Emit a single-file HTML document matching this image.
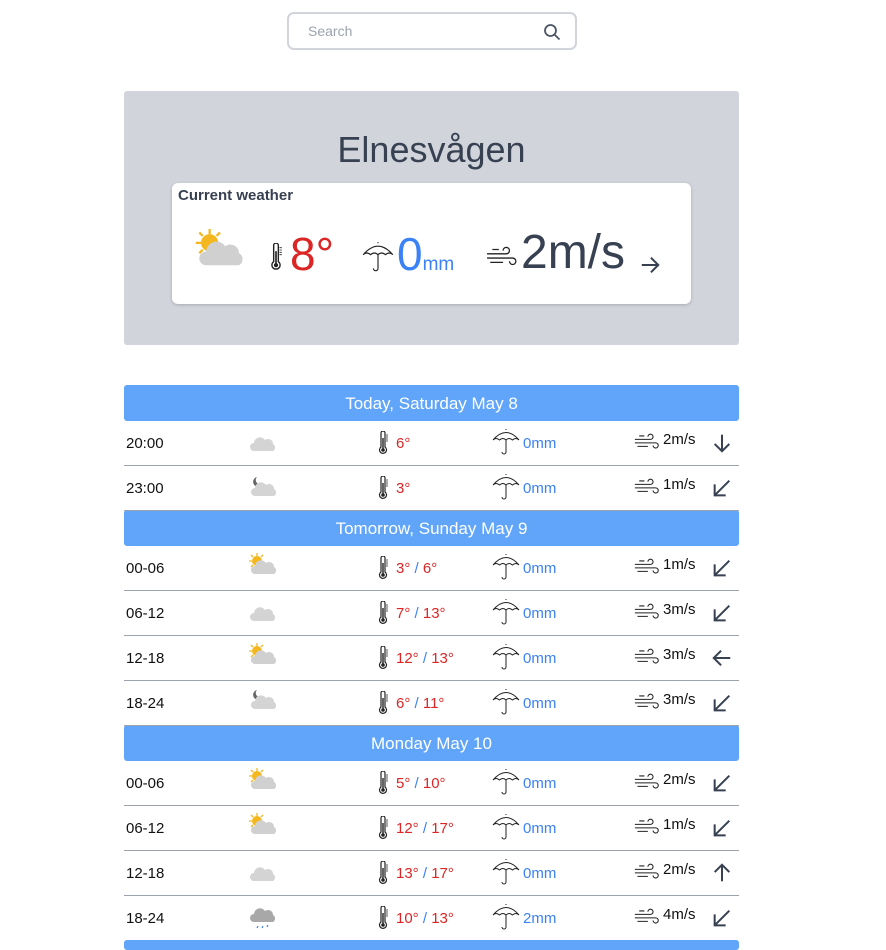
<!DOCTYPE html>
<html><head><meta charset="utf-8"><style>
*{box-sizing:border-box;margin:0;padding:0}
body{width:886px;height:942px;overflow:hidden;background:#fff;font-family:"Liberation Sans",sans-serif;color:#111;position:relative}
.search{position:absolute;left:287px;top:12px;width:290px;height:38px;border:2px solid #d1d5db;border-radius:7px}
.search span{position:absolute;left:19px;top:9px;font-size:14px;color:#9ca3af}
.search svg{position:absolute;right:14px;top:9px}
.card{position:absolute;left:124px;top:91px;width:615px;height:254px;background:#d1d5db;border-radius:3px}
.city{position:absolute;left:0;width:615px;top:38px;text-align:center;font-size:36px;color:#374151}
.cur{position:absolute;left:48px;top:92px;width:519px;height:121px;background:#fff;border-radius:6px;box-shadow:0 1px 3px rgba(0,0,0,.2)}
.cur .t{position:absolute;left:6px;top:4px;font-size:15px;color:#374151;font-weight:bold}
.abs{position:absolute}
.hdr{position:absolute;left:124px;width:615px;height:36px;background:#60a5fa;border-radius:3px;color:#fff;font-size:17px;text-align:center;line-height:37px}
.row{position:absolute;left:124px;width:615px;height:45px;border-bottom:1px solid #9ca3af;font-size:15px}
.row .c{position:absolute;top:14px}
.red{color:#dc2626}.blue{color:#3b82f6}
</style></head><body>
<svg width="0" height="0" style="position:absolute">
<defs>
<symbol id="th" viewBox="0 0 10 24"><path d="M3 2a2 2 0 0 1 4 0v14a3.5 3.5 0 1 1-4 0z" fill="none" stroke="#222" stroke-width="1.2"/><circle cx="5" cy="19" r="1.8" fill="#222"/><path d="M5 7v11" stroke="#222" stroke-width="1.4"/><path d="M8 4h2M8 6h2M8 8h2M8 10h2" stroke="#222" stroke-width=".7"/></symbol>
<symbol id="um" viewBox="0 0 28 28"><path d="M1 12 Q14 -3 27 12 Q24 9 20.5 12 Q17 9 14 12 Q11 9 7.5 12 Q4 9 1 12z" fill="none" stroke="#222" stroke-width="1"/><path d="M14 2v-1M14 12v12a2 2 0 0 1-4 0" fill="none" stroke="#222" stroke-width="1"/></symbol>
<symbol id="wi" viewBox="0 0 30 20"><path d="M1 7h18a3 3 0 1 0-3-3M1 11h24a3 3 0 1 1-3 3M4 15h12M6 3h6" fill="none" stroke="#222" stroke-width="1.2"/></symbol>
<symbol id="cl" viewBox="0 0 30 20"><path d="M6 18a4 4 0 0 1 0-8 6 6 0 0 1 11-3 5 5 0 0 1 8 4 4 4 0 0 1 0 7z" fill="#d4d4d4"/></symbol>
<symbol id="sc" viewBox="0 0 30 22"><circle cx="9" cy="8" r="5" fill="#f5b71f"/><path d="M9 0v3M1 8h3M3 2l2 2M15 2l-2 2M3 14l2-2" stroke="#f5b71f" stroke-width="1.3"/><path d="M7 21a4 4 0 0 1 0-8 6 6 0 0 1 11-3 5 5 0 0 1 8 4 4 4 0 0 1 0 7z" fill="#d0d0d0"/></symbol>
<symbol id="mc" viewBox="0 0 30 22"><path d="M9 2a5 5 0 1 0 6 6 4 4 0 0 1-6-6z" fill="#666"/><path d="M7 21a4 4 0 0 1 0-8 6 6 0 0 1 11-3 5 5 0 0 1 8 4 4 4 0 0 1 0 7z" fill="#d4d4d4"/></symbol>
<symbol id="rc" viewBox="0 0 30 26"><path d="M6 17a4 4 0 0 1 0-8 6 6 0 0 1 11-3 5 5 0 0 1 8 4 4 4 0 0 1 0 7z" fill="#a8a8a8"/><path d="M10 21l-1 2M15 21l-1 2M20 20l-1 2" stroke="#3b82f6" stroke-width="1.2"/></symbol>
<symbol id="ar" viewBox="0 0 24 24"><path d="M12 3v18M4 13l8 8 8-8" fill="none" stroke="#374151" stroke-width="2.2"/></symbol>
<symbol id="ad" viewBox="0 0 24 24"><path d="M20 4L4 20M4 8v12h12" fill="none" stroke="#374151" stroke-width="2.2"/></symbol>
</defs></svg>

<div class="search"><span>Search</span><svg width="18" height="18" viewBox="0 0 18 18"><circle cx="7.5" cy="7.5" r="5.5" fill="none" stroke="#4b5563" stroke-width="1.8"/><path d="M11.5 11.5l5 5" stroke="#4b5563" stroke-width="1.8"/></svg></div>

<div class="card"><div class="city">Elnesvågen</div>
<div class="cur"><div class="t">Current weather</div>
<svg class="abs" style="left:22px;top:46px" width="52" height="38"><use href="#sc"/></svg>
<svg class="abs" style="left:97px;top:60px" width="14" height="28"><use href="#th"/></svg>
<div class="abs red" style="left:118px;top:44px;font-size:46px">8°</div>
<svg class="abs" style="left:190px;top:58px" width="32" height="32"><use href="#um"/></svg>
<div class="abs blue" style="left:225px;top:44px;font-size:46px">0<span style="font-size:19px">mm</span></div>
<svg class="abs" style="left:314px;top:63px" width="32" height="22"><use href="#wi"/></svg>
<div class="abs" style="left:349px;top:42px;font-size:48px;color:#374151">2m/s</div>
<svg class="abs" style="left:467px;top:71px;transform:rotate(-90deg)" width="22" height="22"><use href="#ar"/></svg>
</div></div>

<div class="hdr" style="top:385px">Today, Saturday May 8</div>
<div class="hdr" style="top:510px">Tomorrow, Sunday May 9</div>
<div class="hdr" style="top:725px">Monday May 10</div>
<div class="hdr" style="top:940px;height:10px"></div>

<div class="row" style="top:421px"><div class="c" style="left:2px">20:00</div><svg class="abs" style="left:124px;top:12px" width="30" height="20"><use href="#cl"/></svg><svg class="abs" style="left:253px;top:10px" width="12" height="24"><use href="#th"/></svg><div class="c red" style="left:272px">6°</div><svg class="abs" style="left:368px;top:7px" width="28" height="28"><use href="#um"/></svg><div class="c blue" style="left:399px">0mm</div><svg class="abs" style="left:510px;top:12px" width="26" height="18"><use href="#wi"/></svg><div class="c" style="left:539px;top:10px">2m/s</div><svg class="abs" style="left:587px;top:11px" width="22" height="22"><use href="#ar"/></svg></div>

<div class="row" style="top:466px"><div class="c" style="left:2px">23:00</div><svg class="abs" style="left:124px;top:9px" width="30" height="22"><use href="#mc"/></svg><svg class="abs" style="left:253px;top:10px" width="12" height="24"><use href="#th"/></svg><div class="c red" style="left:272px">3°</div><svg class="abs" style="left:368px;top:7px" width="28" height="28"><use href="#um"/></svg><div class="c blue" style="left:399px">0mm</div><svg class="abs" style="left:510px;top:12px" width="26" height="18"><use href="#wi"/></svg><div class="c" style="left:539px;top:10px">1m/s</div><svg class="abs" style="left:587px;top:11px" width="22" height="22"><use href="#ad"/></svg></div>

<div class="row" style="top:546px"><div class="c" style="left:2px">00-06</div><svg class="abs" style="left:124px;top:7px" width="30" height="22"><use href="#sc"/></svg><svg class="abs" style="left:253px;top:10px" width="12" height="24"><use href="#th"/></svg><div class="c red" style="left:272px">3° <span class="blue">/</span> 6°</div><svg class="abs" style="left:368px;top:7px" width="28" height="28"><use href="#um"/></svg><div class="c blue" style="left:399px">0mm</div><svg class="abs" style="left:510px;top:12px" width="26" height="18"><use href="#wi"/></svg><div class="c" style="left:539px;top:10px">1m/s</div><svg class="abs" style="left:587px;top:11px" width="22" height="22"><use href="#ad"/></svg></div>

<div class="row" style="top:591px"><div class="c" style="left:2px">06-12</div><svg class="abs" style="left:124px;top:12px" width="30" height="20"><use href="#cl"/></svg><svg class="abs" style="left:253px;top:10px" width="12" height="24"><use href="#th"/></svg><div class="c red" style="left:272px">7° <span class="blue">/</span> 13°</div><svg class="abs" style="left:368px;top:7px" width="28" height="28"><use href="#um"/></svg><div class="c blue" style="left:399px">0mm</div><svg class="abs" style="left:510px;top:12px" width="26" height="18"><use href="#wi"/></svg><div class="c" style="left:539px;top:10px">3m/s</div><svg class="abs" style="left:587px;top:11px" width="22" height="22"><use href="#ad"/></svg></div>

<div class="row" style="top:636px"><div class="c" style="left:2px">12-18</div><svg class="abs" style="left:124px;top:7px" width="30" height="22"><use href="#sc"/></svg><svg class="abs" style="left:253px;top:10px" width="12" height="24"><use href="#th"/></svg><div class="c red" style="left:272px">12° <span class="blue">/</span> 13°</div><svg class="abs" style="left:368px;top:7px" width="28" height="28"><use href="#um"/></svg><div class="c blue" style="left:399px">0mm</div><svg class="abs" style="left:510px;top:12px" width="26" height="18"><use href="#wi"/></svg><div class="c" style="left:539px;top:10px">3m/s</div><svg class="abs" style="left:587px;top:11px;transform:rotate(90deg)" width="22" height="22"><use href="#ar"/></svg></div>

<div class="row" style="top:681px"><div class="c" style="left:2px">18-24</div><svg class="abs" style="left:124px;top:7px" width="30" height="22"><use href="#mc"/></svg><svg class="abs" style="left:253px;top:10px" width="12" height="24"><use href="#th"/></svg><div class="c red" style="left:272px">6° <span class="blue">/</span> 11°</div><svg class="abs" style="left:368px;top:7px" width="28" height="28"><use href="#um"/></svg><div class="c blue" style="left:399px">0mm</div><svg class="abs" style="left:510px;top:12px" width="26" height="18"><use href="#wi"/></svg><div class="c" style="left:539px;top:10px">3m/s</div><svg class="abs" style="left:587px;top:11px" width="22" height="22"><use href="#ad"/></svg></div>

<div class="row" style="top:761px"><div class="c" style="left:2px">00-06</div><svg class="abs" style="left:124px;top:7px" width="30" height="22"><use href="#sc"/></svg><svg class="abs" style="left:253px;top:10px" width="12" height="24"><use href="#th"/></svg><div class="c red" style="left:272px">5° <span class="blue">/</span> 10°</div><svg class="abs" style="left:368px;top:7px" width="28" height="28"><use href="#um"/></svg><div class="c blue" style="left:399px">0mm</div><svg class="abs" style="left:510px;top:12px" width="26" height="18"><use href="#wi"/></svg><div class="c" style="left:539px;top:10px">2m/s</div><svg class="abs" style="left:587px;top:11px" width="22" height="22"><use href="#ad"/></svg></div>

<div class="row" style="top:806px"><div class="c" style="left:2px">06-12</div><svg class="abs" style="left:124px;top:7px" width="30" height="22"><use href="#sc"/></svg><svg class="abs" style="left:253px;top:10px" width="12" height="24"><use href="#th"/></svg><div class="c red" style="left:272px">12° <span class="blue">/</span> 17°</div><svg class="abs" style="left:368px;top:7px" width="28" height="28"><use href="#um"/></svg><div class="c blue" style="left:399px">0mm</div><svg class="abs" style="left:510px;top:12px" width="26" height="18"><use href="#wi"/></svg><div class="c" style="left:539px;top:10px">1m/s</div><svg class="abs" style="left:587px;top:11px" width="22" height="22"><use href="#ad"/></svg></div>

<div class="row" style="top:851px"><div class="c" style="left:2px">12-18</div><svg class="abs" style="left:124px;top:12px" width="30" height="20"><use href="#cl"/></svg><svg class="abs" style="left:253px;top:10px" width="12" height="24"><use href="#th"/></svg><div class="c red" style="left:272px">13° <span class="blue">/</span> 17°</div><svg class="abs" style="left:368px;top:7px" width="28" height="28"><use href="#um"/></svg><div class="c blue" style="left:399px">0mm</div><svg class="abs" style="left:510px;top:12px" width="26" height="18"><use href="#wi"/></svg><div class="c" style="left:539px;top:10px">2m/s</div><svg class="abs" style="left:587px;top:11px;transform:rotate(180deg)" width="22" height="22"><use href="#ar"/></svg></div>

<div class="row" style="top:896px;border-bottom:none"><div class="c" style="left:2px">18-24</div><svg class="abs" style="left:124px;top:9px" width="30" height="26"><use href="#rc"/></svg><svg class="abs" style="left:253px;top:10px" width="12" height="24"><use href="#th"/></svg><div class="c red" style="left:272px">10° <span class="blue">/</span> 13°</div><svg class="abs" style="left:368px;top:7px" width="28" height="28"><use href="#um"/></svg><div class="c blue" style="left:399px">2mm</div><svg class="abs" style="left:510px;top:12px" width="26" height="18"><use href="#wi"/></svg><div class="c" style="left:539px;top:10px">4m/s</div><svg class="abs" style="left:587px;top:11px" width="22" height="22"><use href="#ad"/></svg></div>
</body></html>
